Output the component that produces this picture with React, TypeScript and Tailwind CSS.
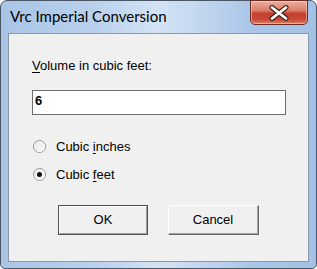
import React from "react";

function Radio({ checked }: { checked?: boolean }) {
  return (
    <div className="w-[13px] h-[13px] rounded-full border border-[#8f8f8f] bg-[linear-gradient(135deg,#d6d6d6,#ffffff_60%)] flex items-center justify-center">
      <div className="w-[11px] h-[11px] rounded-full bg-[linear-gradient(135deg,#e9e9e9,#fbfbfb)] flex items-center justify-center">
        {checked && <div className="w-[5px] h-[5px] rounded-full bg-[#111]" />}
      </div>
    </div>
  );
}

export default function App() {
  const font = { fontFamily: '"Liberation Sans", Arial, sans-serif' };
  return (
    <div className="w-[317px] h-[269px] bg-white">
      <div className="w-[317px] h-[269px] rounded-t-[7px] rounded-b-[5px] border border-[#4a5566] bg-[linear-gradient(90deg,#a9c5e6_0%,#b9d1ec_30%,#d3e3f4_50%,#c4d8ef_62%,#a9c6e8_80%,#a4c2e6_100%)] flex flex-col">
        <div className="h-[31px] flex items-start justify-between pl-[9px] pr-[8px]">
          <div
            className="text-[15px] text-[#000] mt-[5px] leading-[20px]"
            style={{ fontFamily: 'Lato, "Noto Sans", sans-serif' }}
          >
            Vrc Imperial Conversion
          </div>
          <div className="w-[58px] h-[25px] -mt-[1px] rounded-b-[5px] border border-[#6a2b22] bg-[linear-gradient(180deg,#eab0a3_0%,#dc7e6b_40%,#c2402c_55%,#c84a36_80%,#dd8062_100%)] shadow-[inset_0_0_0_1px_rgba(255,220,210,0.55)] flex items-center justify-center">
            <svg width="22" height="16" viewBox="0 0 22 16">
              <path d="M4 2.5 L18 13.5 M18 2.5 L4 13.5" stroke="#3d1e1a" strokeWidth="5" strokeLinecap="round" />
              <path d="M4 2.5 L18 13.5 M18 2.5 L4 13.5" stroke="#ffffff" strokeWidth="2.8" strokeLinecap="round" />
            </svg>
          </div>
        </div>
        <div className="mx-[7px] mt-[1px] h-[229px] border border-[#8b98a8] bg-[#f0f0f0] flex flex-col pl-[23px]" style={font}>
          <div className="mt-[24px] text-[13px] leading-[15px] text-black">
            <span className="underline underline-offset-2">V</span>olume in cubic feet:
          </div>
          <div className="mt-[17px] w-[254px] h-[25px] border border-[#6e6e6e] bg-white pl-[2px] pt-[2px] text-[13px] font-bold leading-[15px] text-black">
            6
          </div>
          <div className="mt-[24px] flex items-center h-[15px]">
            <div className="ml-[1px]"><Radio /></div>
            <div className="ml-[10px] text-[13px] leading-[15px] text-black">
              Cubic <span className="underline underline-offset-2">i</span>nches
            </div>
          </div>
          <div className="mt-[13px] flex items-center h-[15px]">
            <div className="ml-[1px]"><Radio checked /></div>
            <div className="ml-[10px] text-[13px] leading-[15px] text-black">
              Cubic <span className="underline underline-offset-2">f</span>eet
            </div>
          </div>
          <div className="mt-[23px] flex gap-[20px] ml-[26px]">
            <div className="w-[90px] h-[30px] border border-[#505050] bg-[#f0f0f0]">
              <div className="w-full h-full border-t border-l border-white border-b border-r border-b-[#a0a0a0] border-r-[#a0a0a0] flex items-center justify-center text-[13px] text-black">
                OK
              </div>
            </div>
            <div className="w-[91px] h-[30px] border-t border-l border-white border-b border-r border-b-[#696969] border-r-[#696969] bg-[#f0f0f0]">
              <div className="w-full h-full border-b border-r border-[#a0a0a0] border-t-0 border-l-0 flex items-center justify-center text-[13px] text-black">
                Cancel
              </div>
            </div>
          </div>
        </div>
      </div>
    </div>
  );
}
